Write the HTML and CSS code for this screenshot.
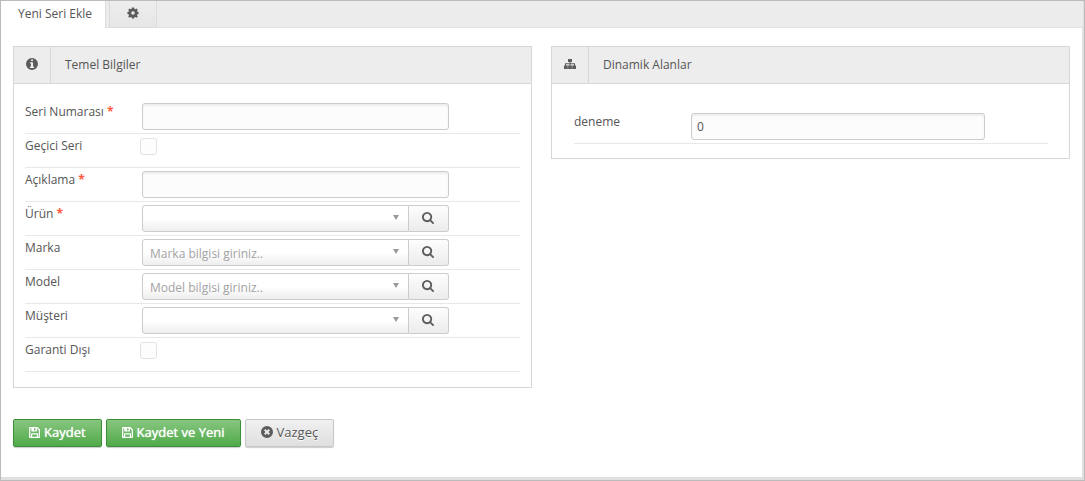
FILE: index.html
```
<!DOCTYPE html>
<html lang="tr">
<head>
<meta charset="utf-8">
<meta name="viewport" content="width=device-width, initial-scale=1">
<title>Yeni Seri Ekle</title>
<link rel="stylesheet" href="styles.css">
</head>
<body>
<svg class="sprite" aria-hidden="true">
  <symbol id="i-search" viewBox="0 0 1664 1664"><path d="M1152 704q0-185-131.500-316.500t-316.500-131.500-316.500 131.500-131.500 316.500 131.500 316.500 316.500 131.500 316.500-131.500 131.500-316.500zM1664 1536q0 52-38 90t-90 38q-54 0-90-38l-343-342q-179 124-399 124-143 0-273.500-55.500t-225-150-150-225-55.500-273.500 55.500-273.500 150-225 225-150 273.500-55.500 273.500 55.500 225 150 150 225 55.500 273.500q0 220-124 399l343 343q37 37 37 90z"/></symbol>
  <symbol id="i-save" viewBox="0 0 11 11"><path fill-rule="evenodd" d="M1 0h7.500L11 2.500V10a1 1 0 0 1-1 1H1a1 1 0 0 1-1-1V1a1 1 0 0 1 1-1zM1.300 1.300v8.400H2V7a.8.8 0 0 1 .8-.8h5.400A.8.8 0 0 1 9 7v2.700h.7V3.100L8 1.300v2.500a.7.7 0 0 1-.7.700H3a.7.7 0 0 1-.7-.7V1.300zM5 1.200v2.200h1.500V1.200zM3.200 7.500v2.200h4.600V7.500z"/></symbol>
</svg>
<div class="window">
  <nav class="tabs">
    <button type="button" class="tab tab-active">Yeni Seri Ekle</button>
    <button type="button" class="tab" aria-label="Ayarlar">
      <svg class="icon" viewBox="0 0 12 12"><path fill-rule="evenodd" d="M4.900 .5h2.200l.3 1.300.9.400 1.200-.8 1.300 1.300-.8 1.200.4.900 1.200.3v1.900l-1.200.3-.4.900.8 1.200-1.300 1.300-1.200-.8-.9.400-.3 1.300h-2.200l-.3-1.300-.9-.4-1.200.8-1.300-1.300.8-1.200-.4-.9L.4 7V5.100l1.200-.3.400-.9-.8-1.200 1.300-1.300 1.200.8.900-.4zM6 4.200a1.800 1.800 0 1 0 0 3.600 1.800 1.800 0 0 0 0-3.600z"/></svg>
    </button>
  </nav>
  <form class="content">
    <div class="panels">
      <section class="panel">
        <header class="panel-head">
          <span class="panel-icon"><svg class="icon" viewBox="0 0 12 12"><path fill-rule="evenodd" d="M6 0a6 6 0 1 0 0 12A6 6 0 0 0 6 0zM5 1.500h2v1.600H5zM4 4.200h3v4.400h1v1.500H4V8.600h1V5.600H4z"/></svg></span>
          <h2 class="panel-title">Temel Bilgiler</h2>
        </header>
        <div class="panel-body">
          <div class="row"><label class="label" for="serial">Seri Numarası <span class="required">*</span></label><input class="field" id="serial" type="text"></div>
          <div class="row"><label class="label" for="temp">Geçici Seri</label><input class="check" id="temp" type="checkbox"></div>
          <div class="row"><label class="label" for="desc">Açıklama <span class="required">*</span></label><input class="field" id="desc" type="text"></div>
          <div class="row"><label class="label" for="product">Ürün <span class="required">*</span></label>
            <div class="picker"><span class="select-wrap"><select class="select" id="product"><option></option></select></span><button type="button" class="search" aria-label="Ürün ara"><svg class="icon"><use href="#i-search"/></svg></button></div></div>
          <div class="row"><label class="label" for="brand">Marka</label>
            <div class="picker"><span class="select-wrap"><select class="select" id="brand"><option>Marka bilgisi giriniz..</option></select></span><button type="button" class="search" aria-label="Marka ara"><svg class="icon"><use href="#i-search"/></svg></button></div></div>
          <div class="row"><label class="label" for="model">Model</label>
            <div class="picker"><span class="select-wrap"><select class="select" id="model"><option>Model bilgisi giriniz..</option></select></span><button type="button" class="search" aria-label="Model ara"><svg class="icon"><use href="#i-search"/></svg></button></div></div>
          <div class="row"><label class="label" for="customer">Müşteri</label>
            <div class="picker"><span class="select-wrap"><select class="select" id="customer"><option></option></select></span><button type="button" class="search" aria-label="Müşteri ara"><svg class="icon"><use href="#i-search"/></svg></button></div></div>
          <div class="row"><label class="label" for="warranty">Garanti Dışı</label><input class="check" id="warranty" type="checkbox"></div>
        </div>
      </section>
      <section class="panel">
        <header class="panel-head">
          <span class="panel-icon"><svg class="icon" viewBox="0 0 12 12"><path d="M4 1h4v3H6.500v1.200H11V7.500h1v3.500H8.200V7.500H10V6.200H6.500v1.300H7.900V11H4.100V7.500H5.500V6.200H2v1.300h1.800V11H0V7.500h1V5.200h4.500V4H4z"/></svg></span>
          <h2 class="panel-title">Dinamik Alanlar</h2>
        </header>
        <div class="panel-body panel-body-inset">
          <div class="row"><label class="label" for="trial">deneme</label><input class="field" id="trial" type="text" value="0"></div>
        </div>
      </section>
    </div>
    <div class="actions">
      <button type="button" class="btn btn-primary"><svg class="icon icon-save"><use href="#i-save"/></svg>Kaydet</button>
      <button type="button" class="btn btn-primary"><svg class="icon icon-save"><use href="#i-save"/></svg>Kaydet ve Yeni</button>
      <button type="button" class="btn"><svg class="icon" viewBox="0 0 12 12"><path fill-rule="evenodd" d="M6 0a6 6 0 1 0 0 12A6 6 0 0 0 6 0zM4.400 3L6 4.600 7.600 3 9 4.400 7.400 6 9 7.600 7.600 9 6 7.400 4.400 9 3 7.600 4.600 6 3 4.400z"/></svg>Vazgeç</button>
    </div>
  </form>
</div>
</body>
</html>
```
FILE: styles.css
```
* { box-sizing: border-box; }
body {
  margin: 0;
  font-family: "Open Sans", "Noto Sans", sans-serif;
  font-size: 12px;
  line-height: 16px;
  color: #555;
}
button, input, select { font: inherit; color: inherit; margin: 0; }
.sprite { display: none; }
.icon { width: 12px; height: 12px; fill: #5c5c5c; display: block; flex: none; }
.icon-save { width: 11px; height: 11px; }

.window {
  min-height: 100vh;
  display: flex;
  flex-direction: column;
  border: 1px solid #bbb;
  background: #e0e0e0;
  padding: 0 1px 3px 0;
}
.tabs {
  display: flex;
  gap: 3px;
  height: 27px;
  background: #ececec;
  border-bottom: 1px solid #e2e2e2;
}
.tab {
  display: flex;
  align-items: center;
  justify-content: center;
  padding: 0 17px 2px;
  border: 1px solid #dcdcdc;
  border-top: 0;
  background: linear-gradient(#eee, #e6e6e6);
  height: 27px;
}
.tab-active {
  padding: 0 13px 2px 17px;
  background: #fff;
  border-width: 0 1px 0 0;
}
.content {
  flex: 1;
  margin-right: 1px;
  padding: 18px 12px 30px;
  background: #fff;
}
.panels {
  display: grid;
  grid-template-columns: 1fr 1fr;
  gap: 19px;
  align-items: start;
}
.panel { border: 1px solid #d7d7d7; }
.panel-head {
  display: flex;
  height: 37px;
  background: #ededed;
  border-bottom: 1px solid #d7d7d7;
}
.panel-icon {
  width: 37px;
  display: grid;
  place-items: center;
  padding-bottom: 2px;
  border-right: 1px solid #d7d7d7;
}
.panel-title {
  margin: 0;
  padding-left: 14px;
  font-size: 12px;
  font-weight: 400;
  line-height: 36px;
}
.panel-body { padding: 16px 11px 15px; }
.panel-body-inset { padding: 26px 21px 14px 22px; }
.row {
  display: flex;
  align-items: flex-start;
  height: 34px;
  padding-top: 3px;
  border-bottom: 1px solid #e8e8e8;
}
.label { width: 117px; flex: none; padding-top: 1px; }
.required { color: #ff5a40; font-weight: 700; }
.field {
  width: 62%;
  height: 27px;
  padding: 0 5px;
  border: 1px solid #ccc;
  border-radius: 3px;
  background: #fcfcfc;
  box-shadow: inset 0 2px 2px #eee;
}
.check {
  appearance: none;
  width: 17px;
  height: 17px;
  margin: 1px 0 0 -2px;
  border: 1px solid #e2e2e2;
  border-radius: 3px;
  background: #fdfdfd;
}
.picker { display: flex; width: 62%; height: 27px; }
.select-wrap { position: relative; flex: 1; display: flex; }
.select-wrap::after {
  content: "";
  position: absolute;
  right: 10px;
  top: 10px;
  border: 3px solid transparent;
  border-top: 5px solid #999;
  border-bottom: 0;
  pointer-events: none;
}
.select {
  appearance: none;
  width: 100%;
  padding: 2px 20px 0 7px;
  border: 1px solid #ccc;
  border-radius: 3px 0 0 3px;
  background: linear-gradient(#fff 50%, #eee);
  color: #a3a3a3;
}
.search {
  width: 40px;
  display: grid;
  place-items: center;
  padding: 0 0 2px;
  border: 1px solid #ccc;
  border-left: 0;
  border-radius: 0 3px 3px 0;
  background: linear-gradient(#fdfdfd, #ececec);
}
.actions { display: flex; gap: 4px; margin-top: 31px; }
.btn {
  display: flex;
  align-items: center;
  gap: 4px;
  height: 28px;
  padding: 0 15px 2px;
  border: 1px solid #c8c8c8;
  border-radius: 2px;
  background: linear-gradient(#f0f0f0, #dfdfdf);
  box-shadow: 0 1px 1px #ccc;
  font-size: 13px;
  text-shadow: 0 1px 0 #fff;
}
.btn-primary {
  color: #fff;
  border-color: #3b8f36;
  background: linear-gradient(#87c680, #50aa49);
  text-shadow: 0 0 1px #fff;
}
.btn-primary .icon { fill: #fff; }
```
